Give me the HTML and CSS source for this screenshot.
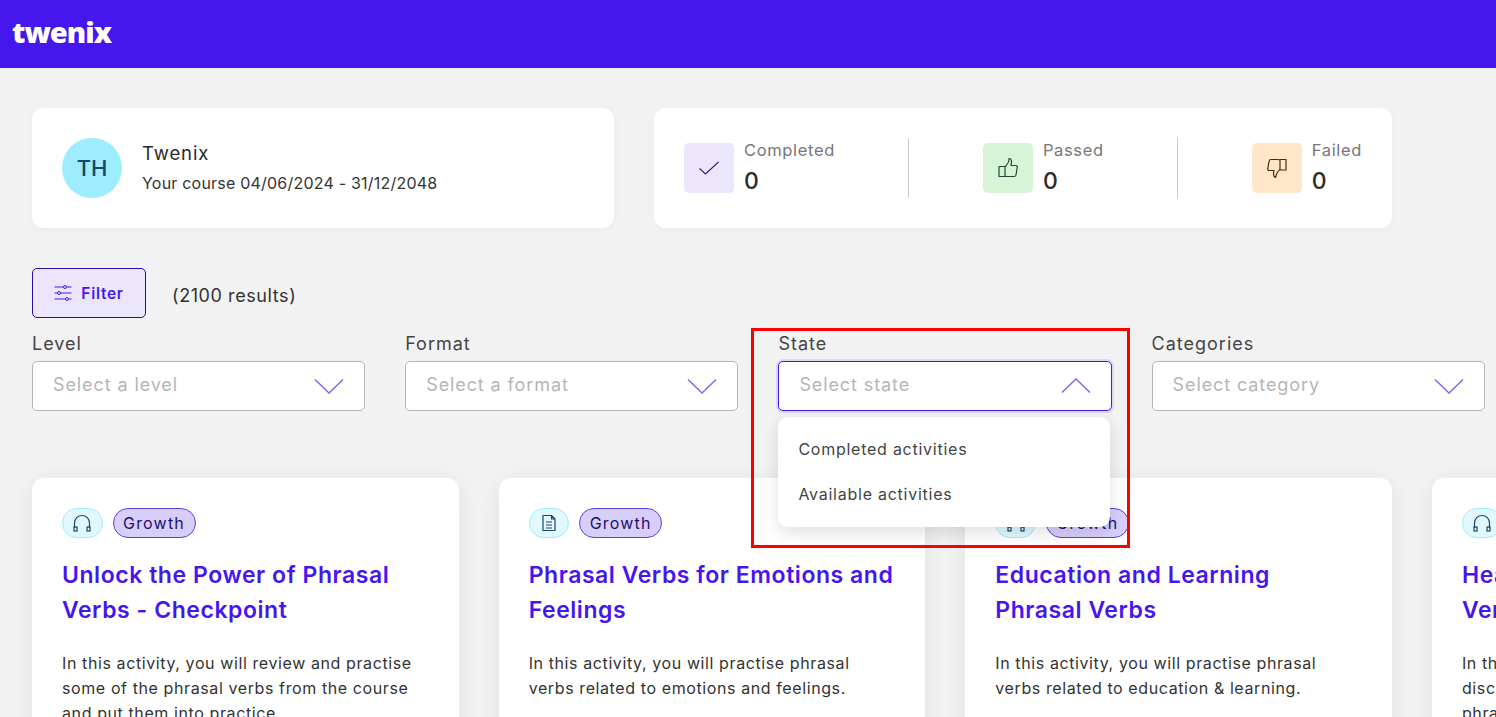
FILE: index.html
```html
<!DOCTYPE html>
<html lang="en">
<head>
<meta charset="utf-8">
<title>Twenix</title>
<link rel="stylesheet" href="styles.css">
</head>
<body>
<header class="topbar"><span class="logo">twenix</span></header>
<main class="page">
  <section class="summary">
    <div class="panel profile">
      <div class="avatar">TH</div>
      <div class="profile-text">
        <div class="profile-name">Twenix</div>
        <div class="profile-course">Your course 04/06/2024 - 31/12/2048</div>
      </div>
    </div>
    <div class="panel stats">
      <div class="stat">
        <div class="stat-icon tint-violet"><svg width="24" height="24" viewBox="0 0 24 24" fill="none" stroke="#2e1a8a" stroke-width="1.1"><path d="M2.500 12.500 8.500 18 21.500 6"/></svg></div>
        <div><div class="stat-label">Completed</div><div class="stat-value">0</div></div>
      </div>
      <div class="stat-rule"></div>
      <div class="stat">
        <div class="stat-icon tint-green"><svg width="24" height="24" viewBox="0 0 24 24" fill="none" stroke="#1d4a3a" stroke-width="1.2" stroke-linejoin="round"><path d="M3 10.500h6v10H3zM9 11l3-4c.6-1 1-2.500 1-4.500 1.500 0 2.500 1.500 2.500 3.500 0 1.500-.5 3-.5 3.500h5c1 0 1.500 1 1.200 2l-1.200 7.500c-.2 1-.8 1.500-1.800 1.500H11c-1 0-2-.5-2-1"/></svg></div>
        <div><div class="stat-label">Passed</div><div class="stat-value">0</div></div>
      </div>
      <div class="stat-rule"></div>
      <div class="stat">
        <div class="stat-icon tint-orange"><svg width="24" height="24" viewBox="0 0 24 24" fill="none" stroke="#4a2a10" stroke-width="1.2" stroke-linejoin="round"><path d="M15 3.500h6v10.500h-6zM15 13l-3 4c-.6 1-1 2.500-1.300 4.500-1.200-.5-2.200-2-2.200-3.500 0-1.500.5-3 .5-3.500h-5c-1 0-1.500-1-1.200-2l1.200-7c.2-1 .8-2 1.800-2H13c1 0 2 .5 2 1"/></svg></div>
        <div><div class="stat-label">Failed</div><div class="stat-value">0</div></div>
      </div>
    </div>
  </section>

  <section class="filter-bar">
    <button class="filter-btn" type="button">
      <svg width="18" height="18" viewBox="0 0 18 18" fill="none" stroke="#4616ef" stroke-width="1"><path d="M0.500 3h9M12.500 3h5M0.500 9h3M6.500 9h11M0.500 15h11M14.500 15h3"/><circle cx="11" cy="3" r="1.500"/><circle cx="5" cy="9" r="1.500"/><circle cx="13" cy="15" r="1.500"/></svg>
      <span>Filter</span>
    </button>
    <span class="results">(2100 results)</span>
  </section>

  <section class="filters">
    <div class="field">
      <div class="field-label">Level</div>
      <div class="select"><span>Select a level</span><svg class="chev" width="30" height="16" viewBox="0 0 30 16" fill="none" stroke="#7f63f0" stroke-width="1.400"><path d="M1 1.500 15 15 29 1.500"/></svg></div>
    </div>
    <div class="field">
      <div class="field-label">Format</div>
      <div class="select"><span>Select a format</span><svg class="chev" width="30" height="16" viewBox="0 0 30 16" fill="none" stroke="#7f63f0" stroke-width="1.400"><path d="M1 1.500 15 15 29 1.500"/></svg></div>
    </div>
    <div class="field">
      <div class="field-label">State</div>
      <div class="select select-open"><span>Select state</span><svg class="chev" width="30" height="16" viewBox="0 0 30 16" fill="none" stroke="#7f63f0" stroke-width="1.400"><path d="M1 14.500 15 1 29 14.500"/></svg></div>
      <ul class="menu">
        <li>Completed activities</li>
        <li>Available activities</li>
      </ul>
    </div>
    <div class="field">
      <div class="field-label">Categories</div>
      <div class="select"><span>Select category</span><svg class="chev" width="30" height="16" viewBox="0 0 30 16" fill="none" stroke="#7f63f0" stroke-width="1.400"><path d="M1 1.500 15 15 29 1.500"/></svg></div>
    </div>
  </section>

  <section class="cards">
    <article class="card">
      <div class="tags">
        <span class="tag-icon"><svg width="20" height="20" viewBox="0 0 20 20" fill="none" stroke="#17466a" stroke-width="1.200"><path d="M2.500 15V10a7.500 7.500 0 0 1 15 0v5"/><rect x="2" y="14" width="3" height="4"/><rect x="15" y="14" width="3" height="4"/></svg></span>
        <span class="tag">Growth</span>
      </div>
      <h2 class="card-title">Unlock the Power of Phrasal<br>Verbs - Checkpoint</h2>
      <p class="card-text">In this activity, you will review and practise<br>some of the phrasal verbs from the course<br>and put them into practice.</p>
    </article>
    <article class="card">
      <div class="tags">
        <span class="tag-icon"><svg width="20" height="20" viewBox="0 0 20 20" fill="none" stroke="#17466a" stroke-width="1.200" stroke-linejoin="round"><path d="M4 2.500h8.500l3.500 3.500v11.500H4zM12.500 2.500V6H16M7 9h6M7 12h6M7 15h6"/></svg></span>
        <span class="tag">Growth</span>
      </div>
      <h2 class="card-title">Phrasal Verbs for Emotions and<br>Feelings</h2>
      <p class="card-text">In this activity, you will practise phrasal<br>verbs related to emotions and feelings.</p>
    </article>
    <article class="card">
      <div class="tags">
        <span class="tag-icon"><svg width="20" height="20" viewBox="0 0 20 20" fill="none" stroke="#17466a" stroke-width="1.200"><path d="M2.500 15V10a7.500 7.500 0 0 1 15 0v5"/><rect x="2" y="14" width="3" height="4"/><rect x="15" y="14" width="3" height="4"/></svg></span>
        <span class="tag">Growth</span>
      </div>
      <h2 class="card-title">Education and Learning<br>Phrasal Verbs</h2>
      <p class="card-text">In this activity, you will practise phrasal<br>verbs related to education &amp; learning.</p>
    </article>
    <article class="card">
      <div class="tags">
        <span class="tag-icon"><svg width="20" height="20" viewBox="0 0 20 20" fill="none" stroke="#17466a" stroke-width="1.200"><path d="M2.500 15V10a7.500 7.500 0 0 1 15 0v5"/><rect x="2" y="14" width="3" height="4"/><rect x="15" y="14" width="3" height="4"/></svg></span>
        <span class="tag">Growth</span>
      </div>
      <h2 class="card-title">Health and Wellbeing Phrasal<br>Verbs</h2>
      <p class="card-text">In this activity, you will<br>discuss health and practise<br>phrasal verbs.</p>
    </article>
  </section>
</main>
<div class="highlight"></div>
</body>
</html>
```

FILE: styles.css
```css
* { box-sizing: border-box; }
html, body { margin: 0; height: 717px; overflow: hidden; }
body {
  position: relative;
  background: #f2f2f2;
  color: #333;
  font-family: Inter, "Liberation Sans", sans-serif;
  font-size: 16px;
}
.topbar {
  height: 68px;
  background: #4616ef;
  display: flex;
  align-items: center;
  padding-left: 12px;
}
.logo {
  color: #fff;
  font-family: "Open Sans", sans-serif;
  font-weight: 800;
  font-size: 29px;
  letter-spacing: -0.95px;
  line-height: 1;
  position: relative;
  top: -3px;
}
.page { padding: 40px 0 0 32px; width: 1496px; }
.summary { display: flex; gap: 40px; }
.panel {
  background: #fff;
  border-radius: 12px;
  height: 120px;
  box-shadow: 0 2px 8px rgba(0,0,0,.03);
}
.profile {
  width: 582px;
  display: flex;
  align-items: center;
  gap: 20px;
  padding-left: 30px;
}
.avatar {
  width: 60px;
  height: 60px;
  border-radius: 50%;
  background: #9dedff;
  color: #17466a;
  display: flex;
  align-items: center;
  justify-content: center;
  font-size: 22px;
  font-weight: 500;
}
.profile-name { font-size: 18.5px; letter-spacing: .9px; line-height: 30px; color: #2b2b2b; }
.profile-course { font-size: 16px; letter-spacing: .21px; line-height: 30px; color: #333; }
.stats {
  width: 738px;
  display: flex;
  align-items: center;
  justify-content: space-between;
  padding: 0 30px;
}
.stat { display: flex; align-items: center; gap: 10px; }
.stat-icon {
  width: 50px;
  height: 50px;
  border-radius: 5px;
  display: flex;
  align-items: center;
  justify-content: center;
}
.tint-violet { background: #ece6fd; }
.tint-green { background: #d5f5d6; }
.tint-orange { background: #ffe6cb; }
.stat-label { font-size: 16.5px; letter-spacing: .65px; line-height: 24px; color: #777; padding-bottom: 1px; }
.stat-value { font-size: 23px; font-weight: 500; line-height: 36px; color: #2b2b2b; }
.stat-rule { width: 1px; height: 60px; background: #c8c8c8; }
.filter-bar { display: flex; align-items: center; gap: 26px; margin-top: 40px; }
.filter-btn {
  width: 114px;
  height: 50px;
  background: #ece6fd;
  border: 1px solid #2e0a9c;
  border-radius: 5px;
  display: flex;
  align-items: center;
  justify-content: center;
  gap: 9px;
  color: #4616ef;
  font: 600 15.5px Inter, sans-serif;
  letter-spacing: .7px;
  padding: 0;
}
.results { font-size: 18px; letter-spacing: .58px; color: #333; position: relative; top: 2px; }
.filters {
  display: grid;
  grid-template-columns: repeat(4, 333.2px);
  column-gap: 40px;
  margin-top: 15px;
}
.field { position: relative; }
.field-label { font-size: 18px; letter-spacing: 1px; line-height: 22px; color: #444; margin-bottom: 6px; }
.select {
  height: 50px;
  background: #fff;
  border: 1px solid #b4b4b4;
  border-radius: 5px;
  display: flex;
  align-items: center;
  justify-content: space-between;
  padding: 0 20px 4px 20px;
  color: #b5b5b5;
  font-size: 18px;
  letter-spacing: .9px;
}
.chev { flex: none; position: relative; top: 2px; }
.select-open { border-color: #4616ef; box-shadow: 0 0 0 2px #ddd5fb; }
.menu {
  position: absolute;
  top: 84px;
  left: 0;
  width: 332px;
  height: 110px;
  margin: 0;
  padding: 10px 0;
  list-style: none;
  background: #fff;
  border-radius: 10px;
  box-shadow: 0 6px 16px rgba(0,0,0,.12);
  z-index: 2;
}
.menu li { height: 45px; line-height: 45px; padding-left: 20px; font-size: 16px; letter-spacing: .75px; color: #444; }
.cards { display: flex; gap: 40px; margin-top: 67px; }
.card {
  flex: 0 0 426.67px;
  height: 300px;
  background: #fff;
  border-radius: 12px;
  padding: 30px;
  box-shadow: 0 4px 24px rgba(0,0,0,.07);
}
.tags { display: flex; gap: 10px; height: 30px; }
.tag-icon {
  width: 40.5px;
  height: 30px;
  border-radius: 15px;
  background: #e2f8ff;
  border: 1px solid #9dedff;
  display: flex;
  align-items: center;
  justify-content: center;
}
.tag {
  width: 83px;
  height: 30px;
  border-radius: 15px;
  background: #d8cefa;
  border: 1px solid #5f3de0;
  display: flex;
  align-items: center;
  justify-content: center;
  font-size: 16px;
  letter-spacing: 1.2px;
  color: #1e0f6e;
}
.card-title {
  margin: 20px 0 0;
  font-size: 23px;
  font-weight: 600;
  line-height: 35px;
  color: #4616ef;
  letter-spacing: .55px;
}
.card-text { margin: 23px 0 0; font-size: 16px; line-height: 25px; letter-spacing: .6px; color: #333; white-space: nowrap; }
.highlight {
  position: absolute;
  left: 751px;
  top: 328px;
  width: 379px;
  height: 220px;
  border: 3px solid #f00;
  z-index: 3;
  pointer-events: none;
}
```
